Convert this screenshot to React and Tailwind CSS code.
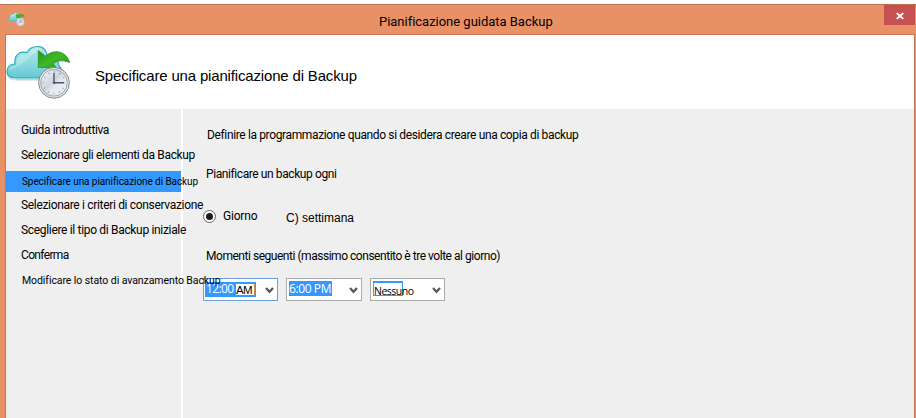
function CloudClockIcon({ className }) {
  return (
    <svg className={className} viewBox="0 0 66 56" fill="none">
      <defs>
        <linearGradient id="cloud" x1="0" y1="0" x2="0" y2="1">
          <stop offset="0" stopColor="#b4e8ea" />
          <stop offset="0.5" stopColor="#8edbe0" />
          <stop offset="1" stopColor="#62c8d2" />
        </linearGradient>
        <linearGradient id="arrow" x1="0" y1="0" x2="1" y2="1">
          <stop offset="0" stopColor="#259416" />
          <stop offset="0.5" stopColor="#41b926" />
          <stop offset="1" stopColor="#249016" />
        </linearGradient>
        <linearGradient id="face" x1="0" y1="0" x2="1" y2="1">
          <stop offset="0" stopColor="#f4f8fb" />
          <stop offset="0.45" stopColor="#ccd5df" />
          <stop offset="0.6" stopColor="#e3e9ef" />
          <stop offset="1" stopColor="#f0f4f8" />
        </linearGradient>
      </defs>
      <path d="M9 34.800h44M8 34.500c-4-.8-7-3-7-7" stroke="#a9bfc4" strokeWidth="1.500" opacity=".7" />
      <path d="M9 33h42c5-1 7-8 2-12 0-5-5-9-11-7C41 6 38 1.500 32 1.500c-6 0-9 2-11 6C14 6 10 9 9 14.500c-.5 2-.5 3 0 4.500-5 0-8 3-8 7.500S4 32.500 9 33Z" fill="url(#cloud)" stroke="#22a8b6" strokeWidth="1.100" />
      <path d="M3 25c2-4 5-4.500 8-4.500-2-7 3-13 10-10 3-6 8-8 13-7C24 11 14 23 3 25Z" fill="#fff" opacity=".25" />
      <path d="M32.300 5.500l7 5.500c9-7 20-6 24.500 6.500-8-3-14-1.500-16.500 1.500l3 3.500H32.300Z" fill="url(#arrow)" stroke="#238816" strokeWidth=".7" strokeLinejoin="round" />
      <circle cx="48" cy="37.800" r="15.400" fill="#e3e6e9" stroke="#858b92" strokeWidth="1" />
      <circle cx="48" cy="37.800" r="13.300" fill="url(#face)" stroke="#8995a2" strokeWidth=".8" />
      <circle cx="48" cy="37.800" r="10.800" stroke="#8b97a5" strokeWidth="1.400" strokeDasharray="1 4.655" strokeDashoffset=".5" />
      <path d="M48 28v9.800h10" stroke="#4a5866" strokeWidth="1.400" />
      <circle cx="48" cy="37.800" r="1.300" fill="#4a5866" />
    </svg>
  );
}

function Chevron() {
  return (
    <svg className="h-[7px] w-[9px] shrink-0" viewBox="0 0 9 7" fill="none">
      <path d="M1 1l3.500 3.800L8 1" stroke="#5a5a5a" strokeWidth="2.300" />
    </svg>
  );
}

const steps = [
  { label: "Guida introduttiva", style: "h-[25px] pl-[15px] text-[12px] tracking-[-0.369px]" },
  { label: "Selezionare gli elementi da Backup", style: "h-[25px] pl-[15px] text-[12px] tracking-[-0.337px]" },
  { label: "Specificare una pianificazione di Backup", style: "mt-1 h-[21px] bg-[#3399ff] pb-px pl-4 text-[10px] tracking-[-0.08px]" },
  { label: "Selezionare i criteri di conservazione", style: "h-[25px] pl-[15px] text-[12px] tracking-[-0.327px]" },
  { label: "Scegliere il tipo di Backup iniziale", style: "h-[25px] pl-[15px] text-[12px] tracking-[-0.326px]" },
  { label: "Conferma", style: "h-[25px] pl-[15px] text-[12px] tracking-[-0.65px]" },
  { label: "Modificare lo stato di avanzamento Backup", style: "h-[27px] pl-4 text-[10.5px] tracking-[-0.075px]" },
];

export default function App() {
  return (
    <div className="flex h-[418px] w-[916px] flex-col overflow-hidden bg-white pt-1 font-[Roboto,'Liberation_Sans',sans-serif] text-black">
      <div className="flex min-h-0 flex-1 flex-col border-t border-[#b8704f] bg-[#e99166] pl-[5px] pr-px">
        <header className="flex h-[29px] shrink-0 items-start">
          <CloudClockIcon className="ml-[3px] mt-[7px] h-[15px] w-[17px]" />
          <h1 className="ml-[354px] mt-2 whitespace-nowrap text-[13px] leading-[18px] tracking-[-0.02px]">Pianificazione guidata Backup</h1>
          <button aria-label="Chiudi" className="ml-auto flex h-5 w-[31px] items-center justify-center bg-[#c75050]">
            <svg className="h-[7px] w-2 translate-y-[0.5px]" viewBox="0 0 8 7">
              <path d="M.7.500l6.600 6M7.300.500l-6.600 6" stroke="#fff" strokeWidth="1.700" />
            </svg>
          </button>
        </header>

        <div className="flex min-h-0 flex-1 flex-col border-x border-t border-[#c9764f] bg-white">
          <div className="flex h-[74px] shrink-0 items-start">
            <CloudClockIcon className="mt-[10px] h-14 w-[66px]" />
            <h2 className="ml-[23px] mt-[31px] whitespace-nowrap font-['Liberation_Sans'] text-[15px] leading-5 tracking-[-0.165px]">
              Specificare una pianificazione di Backup
            </h2>
          </div>

          <div className="flex min-h-0 flex-1 gap-[2px]">
            <nav className="relative z-10 flex w-[175px] shrink-0 flex-col bg-[#efefef] pt-2">
              {steps.map((s) => (
                <div key={s.label} className={`flex shrink-0 items-center whitespace-nowrap ${s.style}`}>
                  {s.label}
                </div>
              ))}
            </nav>

            <main className="flex flex-1 flex-col bg-[#efefef] pl-5 text-[12px] leading-4">
              <p className="ml-1 mt-[18px] whitespace-nowrap tracking-[-0.363px]">
                Definire la programmazione quando si desidera creare una copia di backup
              </p>
              <p className="ml-[3px] mt-[23px] whitespace-nowrap tracking-[-0.408px]">Pianificare un backup ogni</p>
              <div className="mt-[26px] flex h-4 items-center">
                <span className="flex size-[13px] items-center justify-center rounded-full border border-[#666] bg-white">
                  <span className="size-[7px] rounded-full bg-[#1c1c1c]" />
                </span>
                <span className="ml-[7px] w-[63px] tracking-[-0.2px]">Giorno</span>
                <span className="mt-[3px] font-['Liberation_Sans']">C) settimana</span>
              </div>
              <p className="ml-[3px] mt-6 whitespace-nowrap tracking-[-0.467px]">
                Momenti seguenti (massimo consentito è tre volte al giorno)
              </p>
              <div className="mt-[14px] flex">
                <div className="flex h-[23px] w-[75px] items-start justify-between border border-[#6a9fd8] bg-white pl-px pr-[3px] pt-[3px]">
                  <span className="flex h-[15px] w-[51px] items-center bg-[#3399ff] pl-px pr-px font-['Open_Sans'] tracking-[-0.6px] text-white">
                    <span className="-mt-0.5">12:00</span>
                    <span className="ml-auto flex h-[11px] w-[19px] items-center border-r border-[#d08a4a] bg-white font-['Liberation_Sans'] text-[11.5px] text-black">AM</span>
                  </span>
                  <span className="pt-[5px]"><Chevron /></span>
                </div>
                <div className="ml-2 flex h-[23px] w-[76px] items-start justify-between border border-[#ababab] bg-white pl-[2px] pr-[3px] pt-[2px]">
                  <span className="flex h-[15px] w-[43px] items-center whitespace-nowrap bg-[#3399ff] font-['Open_Sans'] tracking-[-0.4px] text-white">6:00 PM</span>
                  <span className="pt-[6px]"><Chevron /></span>
                </div>
                <div className="ml-2 flex h-[23px] w-[75px] items-start justify-between border border-[#ababab] bg-white pl-[2px] pr-[3px] pt-[2px]">
                  <span className="flex h-[15px] w-[30px] items-center border border-t-2 border-[#3399ff]">
                    <span className="mt-[3px] whitespace-nowrap font-['Open_Sans'] text-[10.5px] tracking-[-0.5px]">Nessuno</span>
                  </span>
                  <span className="pt-[6px]"><Chevron /></span>
                </div>
              </div>
            </main>
          </div>
        </div>
      </div>
    </div>
  );
}
